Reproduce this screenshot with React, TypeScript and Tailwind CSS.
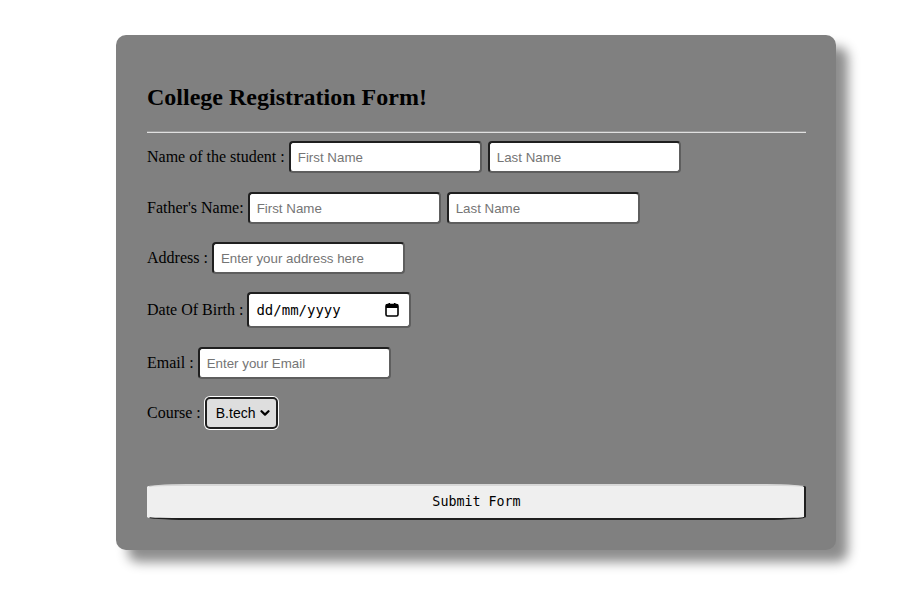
import { ReactNode } from "react";

const serif = "font-['Liberation_Serif','Times_New_Roman',serif]";
const sans = "font-['Liberation_Sans',Arial,sans-serif]";
const mono = "font-['DejaVu_Sans_Mono',monospace]";

function TextBox({ placeholder, className = "" }: { placeholder: string; className?: string }) {
  return (
    <input
      type="text"
      placeholder={placeholder}
      className={`h-[32px] w-[193px] rounded-[4px] border-2 border-t-[#1f1f1f] border-l-[#1f1f1f] border-r-[#5e5e5e] border-b-[#5e5e5e] bg-white px-[7px] text-[13.33px] text-black placeholder:text-[#757575] outline-none ${sans} ${className}`}
    />
  );
}

function Row({ label, className = "", children }: { label: string; className?: string; children: ReactNode }) {
  return (
    <div className={`flex items-center ${className}`}>
      <span className="mr-[4px] whitespace-pre text-[16px] text-black">{label}</span>
      {children}
    </div>
  );
}

export default function App() {
  return (
    <div className="min-h-screen w-full bg-white pt-[35px]">
      <form
        className={`ml-[116px] flex w-[720px] flex-col rounded-[10px] bg-[#808080] pl-[31px] pr-[30px] pt-[48px] pb-[30px] shadow-[12px_12px_12px_rgba(0,0,0,0.45)] ${serif}`}
        onSubmit={(e) => e.preventDefault()}
      >
        <h2 className="text-[24px] font-bold leading-[28px] text-black">College Registration Form!</h2>
        <div className="mt-[20px] h-[2px] w-full border-t border-t-[#9a9a9a] border-b border-b-[#e0e0e0]" />

        <Row label="Name of the student :" className="mt-[8px] h-[32px]">
          <TextBox placeholder="First Name" />
          <TextBox placeholder="Last Name" className="ml-[6px]" />
        </Row>

        <Row label="Father's Name:" className="mt-[19px] h-[32px]">
          <TextBox placeholder="First Name" />
          <TextBox placeholder="Last Name" className="ml-[6px]" />
        </Row>

        <Row label="Address :" className="mt-[18px] h-[32px]">
          <TextBox placeholder="Enter your address here" />
        </Row>

        <Row label="Date Of Birth :" className="mt-[18px] h-[36px]">
          <div className="flex h-[36px] w-[164px] items-center justify-between rounded-[4px] border-2 border-t-[#1f1f1f] border-l-[#1f1f1f] border-r-[#5e5e5e] border-b-[#5e5e5e] bg-white pl-[7px] pr-[10px]">
            <span className={`text-[14px] text-black ${mono}`}>dd/mm/yyyy</span>
            <svg width="14" height="14" viewBox="0 0 14 14" fill="none">
              <rect x="1" y="1.5" width="12" height="11.5" rx="1.5" stroke="black" strokeWidth="1.6" />
              <rect x="1" y="1.5" width="12" height="3.5" fill="black" />
              <rect x="3.5" y="0" width="1.6" height="2.5" fill="black" />
              <rect x="8.9" y="0" width="1.6" height="2.5" fill="black" />
            </svg>
          </div>
        </Row>

        <Row label="Email :" className="mt-[19px] h-[32px]">
          <TextBox placeholder="Enter your Email" />
        </Row>

        <Row label="Course :" className="mt-[17px] h-[34px]">
          <div
            className={`flex h-[32px] w-[73px] items-center justify-between rounded-[5px] border-2 border-[#1f1f1f] bg-[#dedede] pl-[9px] pr-[6px] shadow-[0_0_0_1px_#ffffff] ${sans}`}
          >
            <span className="text-[14px] text-black">B.tech</span>
            <svg width="10" height="8" viewBox="0 0 10 8" fill="none">
              <path d="M1.5 2.2 L5 5.6 L8.5 2.2" stroke="black" strokeWidth="2.2" strokeLinecap="round" strokeLinejoin="round" />
            </svg>
          </div>
        </Row>

        <button
          type="submit"
          className={`mt-[54px] h-[36px] w-full rounded-[40px/3px] border-2 border-t-[#d8d8d8] border-l-[#efefef] border-r-[#1f1f1f] border-b-[#1f1f1f] bg-[#efefef] text-[13.33px] text-black ${mono}`}
        >
          Submit Form
        </button>
      </form>
    </div>
  );
}
